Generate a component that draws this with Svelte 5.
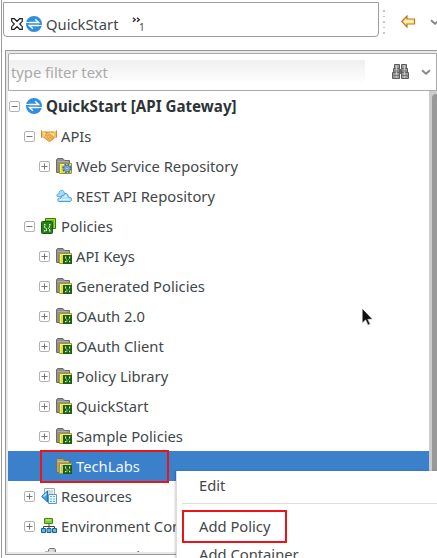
<script>
  const rows = [
    { level: 0, label: 'QuickStart [API Gateway]', icon: 'gateway', toggle: '-' },
    { level: 1, label: 'APIs', icon: 'hands', toggle: '-' },
    { level: 2, label: 'Web Service Repository', icon: 'service', toggle: '+' },
    { level: 2, label: 'REST API Repository', icon: 'cloud', toggle: '' },
    { level: 1, label: 'Policies', icon: 'policies', toggle: '-' },
    { level: 2, label: 'API Keys', icon: 'folder', toggle: '+' },
    { level: 2, label: 'Generated Policies', icon: 'folder', toggle: '+' },
    { level: 2, label: 'OAuth 2.0', icon: 'folder', toggle: '+' },
    { level: 2, label: 'OAuth Client', icon: 'folder', toggle: '+' },
    { level: 2, label: 'Policy Library', icon: 'folder', toggle: '+' },
    { level: 2, label: 'QuickStart', icon: 'folder', toggle: '+' },
    { level: 2, label: 'Sample Policies', icon: 'folder', toggle: '+' },
    { level: 2, label: 'TechLabs', icon: 'folder', toggle: '', selected: true },
    { level: 1, label: 'Resources', icon: 'resources', toggle: '+' },
    { level: 1, label: 'Environment Configuration', icon: 'network', toggle: '+' },
    { level: 1, label: 'Server Settings', icon: 'server', toggle: '' }
  ];
</script>

{#snippet icon(name, active = false)}
  <svg class="icon" width="16" height="16" viewBox="0 0 16 16">
    {#if name === 'gateway'}
      <circle cx="8" cy="8" r="8" fill="#2f8fdd" />
      <path d="M3 6.500h9.600L9.200 3.300M13 9.500H3.400l3.400 3.200" fill="none" stroke="#fff" stroke-width="1.400" />
      <path d="M0 6.500h3M13 9.500h3" stroke="#fff" stroke-width="1.200" />
    {:else if name === 'hands'}
      <path d="M0 2.500l2.500 1L5 3l3 .8L11 3l2.500 .5L16 2.300v7.200l-2 .5-3 2.800-2 1-2-.5-3-2.300-2-1.500-2 .3z" fill="#f6bd60" />
      <path d="M.5 2.500v7M15.500 2.500v7" stroke="#d08a30" />
      <path d="M3 4l3 .5-1.500 3 2 .5 2-1.500 4.500 4M6 4.500L8.500 4l4 1M3 9l4.500 4 1.500.2 4-3.700M6 9.500l2.500 2M8 8.500l2.500 2" fill="none" stroke="#c8822c" stroke-width=".7" />
      <path d="M2 5l2 .2L3 8M9 5l3.500 1v2" fill="none" stroke="#ffe4a4" stroke-width="1.200" />
    {:else if name === 'cloud'}
      <path d="M1 8.500q-.8-3 2-2.600Q3 1.800 6 2.200q2.400 .4 2.200 3 3.300-.2 3 3.300z" fill="#a9dcfa" stroke="#62b2e4" />
      <path d="M2.500 13.500q-1.500-.8-.3-2.900 1-1 2.800-.6Q5 6.800 7.500 7.500q.5-2.400 2.700-2 2.300.6 2 3.500 3.500-.2 3.300 2.200-.1 1.800-1 2.300z" fill="#b0e2fc" stroke="#4d9ed5" />
      <path d="M4 11.500h9M8.500 8.500h2" stroke="#ddf4ff" />
    {:else if name === 'policies'}
      <path d="M4.500.5h10v10h-10z" fill="#68b90c" stroke="#397d08" />
      <path d="M5 1.500h8.500V10" fill="none" stroke="#a1dd36" />
      <rect x=".5" y="3.500" width="11" height="12" rx="1" fill="#268019" stroke="#16550f" />
      <path d="M3.500 8v1.500l2 1V13M8.500 8v1.500l-1.500 1M8.500 11v1.500" stroke="#c9edb4" fill="none" />
      <path d="M3 6h1.500v1.500H3zM8 6h1.500v1.500H8zM3 12h1.500v1.500H3zM8 12h1.500v1.500H8z" fill="#d9f3c8" />
    {:else if name === 'resources'}
      <path d="M3.500.5h10v9h-10z" fill="#f4f7fa" stroke="#9caab6" />
      <path d="M6 3h6M6 5h6" stroke="#aeb9c2" />
      <path d="M.7 8.500L6.500 3v11z" fill="#43a4e4" stroke="#1973b4" />
      <path d="M2.500 8.500l3-3" stroke="#bde8ff" stroke-width="1.500" />
      <path d="M7.500 6.500h8v9h-8z" fill="#edf8ff" stroke="#4c9dd0" />
      <path d="M9 8.500h2m1 0h2m-5 2.500h2m1 0h2m-5 2.500h2m1 0h2" stroke="#5fade1" />
    {:else if name === 'network'}
      <path d="M8 6v5M2.500 11V8.500h11V11" fill="none" stroke="#444" />
      <path d="M3.500.5h8v5h-8z" fill="#7ed030" stroke="#458718" />
      <path d="M5 2h5" stroke="#c9f08c" />
      <path d="M.5 10.500h4v4h-4zM6 10.500h4v4H6zM11.500 10.500h4v4h-4z" fill="#5eb9e8" stroke="#20618c" />
    {:else if name === 'server'}
      <path d="M7.500 4V1.500l1-1h5l1 1v5l-2 2H4V4z" fill="#c8cacc" stroke="#777" />
      <path d="M9 2h3M7 4h5" stroke="#eee" />
    {:else}
      <path d="M.5 14.500v-13l1-1h5.500l1.500 2h5v12z" fill={active ? '#aaa278' : '#909090'} stroke={active ? '#777052' : '#6c6c6c'} />
      <path d="M1.500 3.500h11" stroke={active ? '#c8bf8e' : '#adadad'} />
      <path d="M3.500 15.500v-10h12v10z" fill={active ? '#ccc363' : '#e6de3d'} stroke="#a49728" />
      <path d="M4 6.500h11M4.500 7v8" stroke={active ? '#e4dc8c' : '#f7f071'} />
      {#if name === 'service'}
        <circle cx="11" cy="10.500" r="3.800" fill="none" stroke="#3d6cab" stroke-width="2" stroke-dasharray="1.800 1.180" />
        <circle cx="11" cy="10.500" r="3.100" fill="#83b4e8" stroke="#3f74b5" stroke-width=".8" />
        <circle cx="11" cy="10.500" r="1.200" fill="#eee9a0" stroke="#3d6cab" stroke-width=".6" />
      {:else}
        <rect x="7" y="7" width="9" height="9" fill="#17600f" />
        <path d="M9.500 9v1.500l1.500 1V14M13.500 9v1.500l-1 1M13.500 12.500V14" fill="none" stroke="#a8d092" stroke-width=".8" />
        <path d="M9 8.500h1.200v1.200H9zM13 8.500h1.200v1.200H13zM9 13h1.200v1.200H9zM13 13h1.200v1.200H13z" fill="#e4f6d8" />
      {/if}
    {/if}
  </svg>
{/snippet}

<main>
  <header>
    <div class="tabs">
      <svg class="close" width="12" height="12" viewBox="0 0 12 12"><path d="M.7.7h2.600L6 3.300 8.700.7h2.600v2.600L8.700 6l2.600 2.700v2.600H8.700L6 8.700l-2.700 2.600H.7V8.700L3.300 6 .7 3.300z" fill="#fff" stroke="#222" stroke-width="1.200" /></svg>
      {@render icon('gateway')}
      <span class="tabtitle">QuickStart</span>
      <svg class="overflow" width="9" height="6" viewBox="0 0 9 6"><path d="M1 .7l2.300 2L1 4.700M5 .7l2.300 2-2.300 2" fill="none" stroke="#333" stroke-width="1.400" /></svg>
      <sub>1</sub>
    </div>
    <div class="grip"><i></i><i></i><i></i><i></i><i></i></div>
    <svg class="back" width="15" height="13" viewBox="0 0 15 13"><path d="M.8 6.500L6 1v3h7.500v5H6v3z" fill="#ffe8a0" stroke="#bd7a12" stroke-width="1.200" /><path d="M3 6.500h9" stroke="#fff7d5" /></svg>
    <svg class="chevtop" width="10" height="7" viewBox="0 0 10 7"><path d="M1 1.300l4 3.400 4-3.400" fill="none" stroke="#888" stroke-width="2" /></svg>
  </header>

  <section class="panel">
    <div class="filter">
      <div class="input">type filter text</div>
      <svg class="glasses" width="17" height="17" viewBox="0 0 17 17">
        <path d="M2.500 1.500h5v4h-5zM9.500 1.500h5v4h-5zM1.500 5.500h6v4h-6zM9.500 5.500h6v4h-6zM.5 9.500h7v6h-7zM9.500 9.500h7v6h-7z" fill="#999" stroke="#5c5c5c" />
        <path d="M7 6h3v5H7z" fill="#666" />
        <path d="M4.500 2V15M12.500 2V15" stroke="#c8c8c8" stroke-width="1.500" />
        <path d="M1 12.500h6M10 12.500h6M2 8h5M10 8h5" stroke="#777" />
      </svg>
      <svg class="chev" width="10" height="7" viewBox="0 0 10 7"><path d="M1 1.300l4 3.400 4-3.400" fill="none" stroke="#888" stroke-width="2" /></svg>
    </div>
    <div class="body">
      <div class="tree">
        {#each rows as row}
          <div class="row l{row.level}" class:selected={row.selected}>
            <span class="slot">
              {#if row.toggle}
                <svg width="11" height="11" viewBox="0 0 11 11"><rect x=".5" y=".5" width="10" height="10" rx="1.500" fill="#fff" stroke="#b2b2b2" /><path d={row.toggle === '+' ? 'M2.500 5.500h6M5.500 2.500v6' : 'M2.500 5.500h6'} stroke="#777" /></svg>
              {/if}
            </span>
            {@render icon(row.icon, row.selected)}
            <span class="label">{row.label}</span>
          </div>
        {/each}
      </div>
      <div class="scroll"><div class="thumb"></div></div>
    </div>
  </section>

  <div class="mark tech"></div>
  <div class="menu">
    <div class="item edit">Edit</div>
    <div class="sep"></div>
    <div class="item policy">Add Policy</div>
    <div class="item container">Add Container</div>
  </div>
  <div class="mark add"></div>
  <svg class="cursor" width="14" height="21" viewBox="0 0 14 21"><path d="M1 1v15.500l3.500-3.300 2.300 5.300 2.700-1.200-2.300-4.800H12z" fill="#111" stroke="#fff" /><path d="M4.800 12.800l2.200 5 2-1-2.200-4.600H11" fill="none" stroke="#aaa" stroke-width=".6" /></svg>
</main>

<style>
  :global(body) { overflow: hidden; background: #fff; }
  * { box-sizing: border-box; }
  main {
    position: relative; width: 437px; height: 558px; overflow: hidden;
    padding-left: 1px; background: linear-gradient(90deg, #fff 1px, #9a9a9a 1px, #9a9a9a 2px, #fff 2px);
    font: 14.750px/30px "Noto Sans", sans-serif; color: #42484a; white-space: nowrap;
  }
  svg { display: block; flex: none; }
  header { display: flex; height: 50px; padding: 2px 0 0 2px; align-items: flex-start; }
  .tabs {
    display: flex; flex: none; width: 376px; height: 35px; align-items: center; padding: 8px 0 0 7px;
    border: 1px solid #9c9c9c; border-radius: 0 0 4px 4px;
  }
  .close { margin-right: 3px; }
  .tabtitle { margin-left: 4px; width: 72px; line-height: 20px; }
  .overflow { margin: -7px 0 0 14px; }
  sub { font-size: 10px; line-height: 10px; vertical-align: baseline; margin: 6px 0 0 -2px; }
  .grip { display: flex; flex-direction: column; gap: 4px; margin: 8px 0 0 4px; }
  .grip i { display: block; width: 2px; height: 1.600px; background: #c4c4c4; }
  .back { margin: 13px 0 0 16px; }
  .chevtop { margin: 17px 0 0 14px; }
  .panel {
    display: flex; flex-direction: column; width: 432px; height: 505px; margin-left: 4px;
    padding: 2px 0 2px 2px; border: 1px solid #999; border-right: 0; background: #e8e8e8;
  }
  .filter {
    display: flex; flex: none; height: 38px; border: 1px solid #aaa; border-radius: 2px 0 0 0;
    background: #fff;
  }
  .input {
    width: 356px; height: 28px; margin-top: 6px; padding-left: 2px; line-height: 25px; color: #aaa;
    background: linear-gradient(#efefef, #fff 24px);
  }
  .glasses { margin: 9px 0 0 27px; }
  .chev { margin: 15px 0 0 12px; }
  .body { display: flex; flex: 1; min-height: 0; }
  .tree { width: 421px; overflow: hidden; background: #fff; }
  .row { display: flex; align-items: center; height: 30px; }
  .l0 { padding-left: 1px; font-size: 15.150px; font-weight: 700; color: #2e3436; }
  .l1 { padding-left: 16px; }
  .l2 { padding-left: 31px; }
  .slot { width: 17px; flex: none; }
  .label { margin-left: 4px; }
  .selected { background: #3a80cb; color: #f0f6fc; }
  .scroll { flex: 1; padding: 3px 0 0 3px; background: #ccc; }
  .thumb { height: 100%; background: #999; border-radius: 4px 0 0 0; }
  .menu {
    position: absolute; left: 176px; top: 471px; width: 270px; height: 100px; background: #fff;
    border-left: 1px solid #ddd; box-shadow: -1px 0 2px #0003;
  }
  .item { padding-left: 22px; height: 28px; line-height: 28px; }
  .edit { height: 32px; line-height: 29px; }
  .sep { height: 1px; margin-left: 5px; background: #ddd; }
  .policy { margin-top: 8px; height: 28px; }
  .mark { position: absolute; border: 2px solid #ed1418; }
  .tech { left: 40px; top: 450px; width: 129px; height: 33px; }
  .add { left: 182px; top: 510px; width: 105px; height: 33px; }
  .cursor { position: absolute; left: 361px; top: 307px; }
</style>
